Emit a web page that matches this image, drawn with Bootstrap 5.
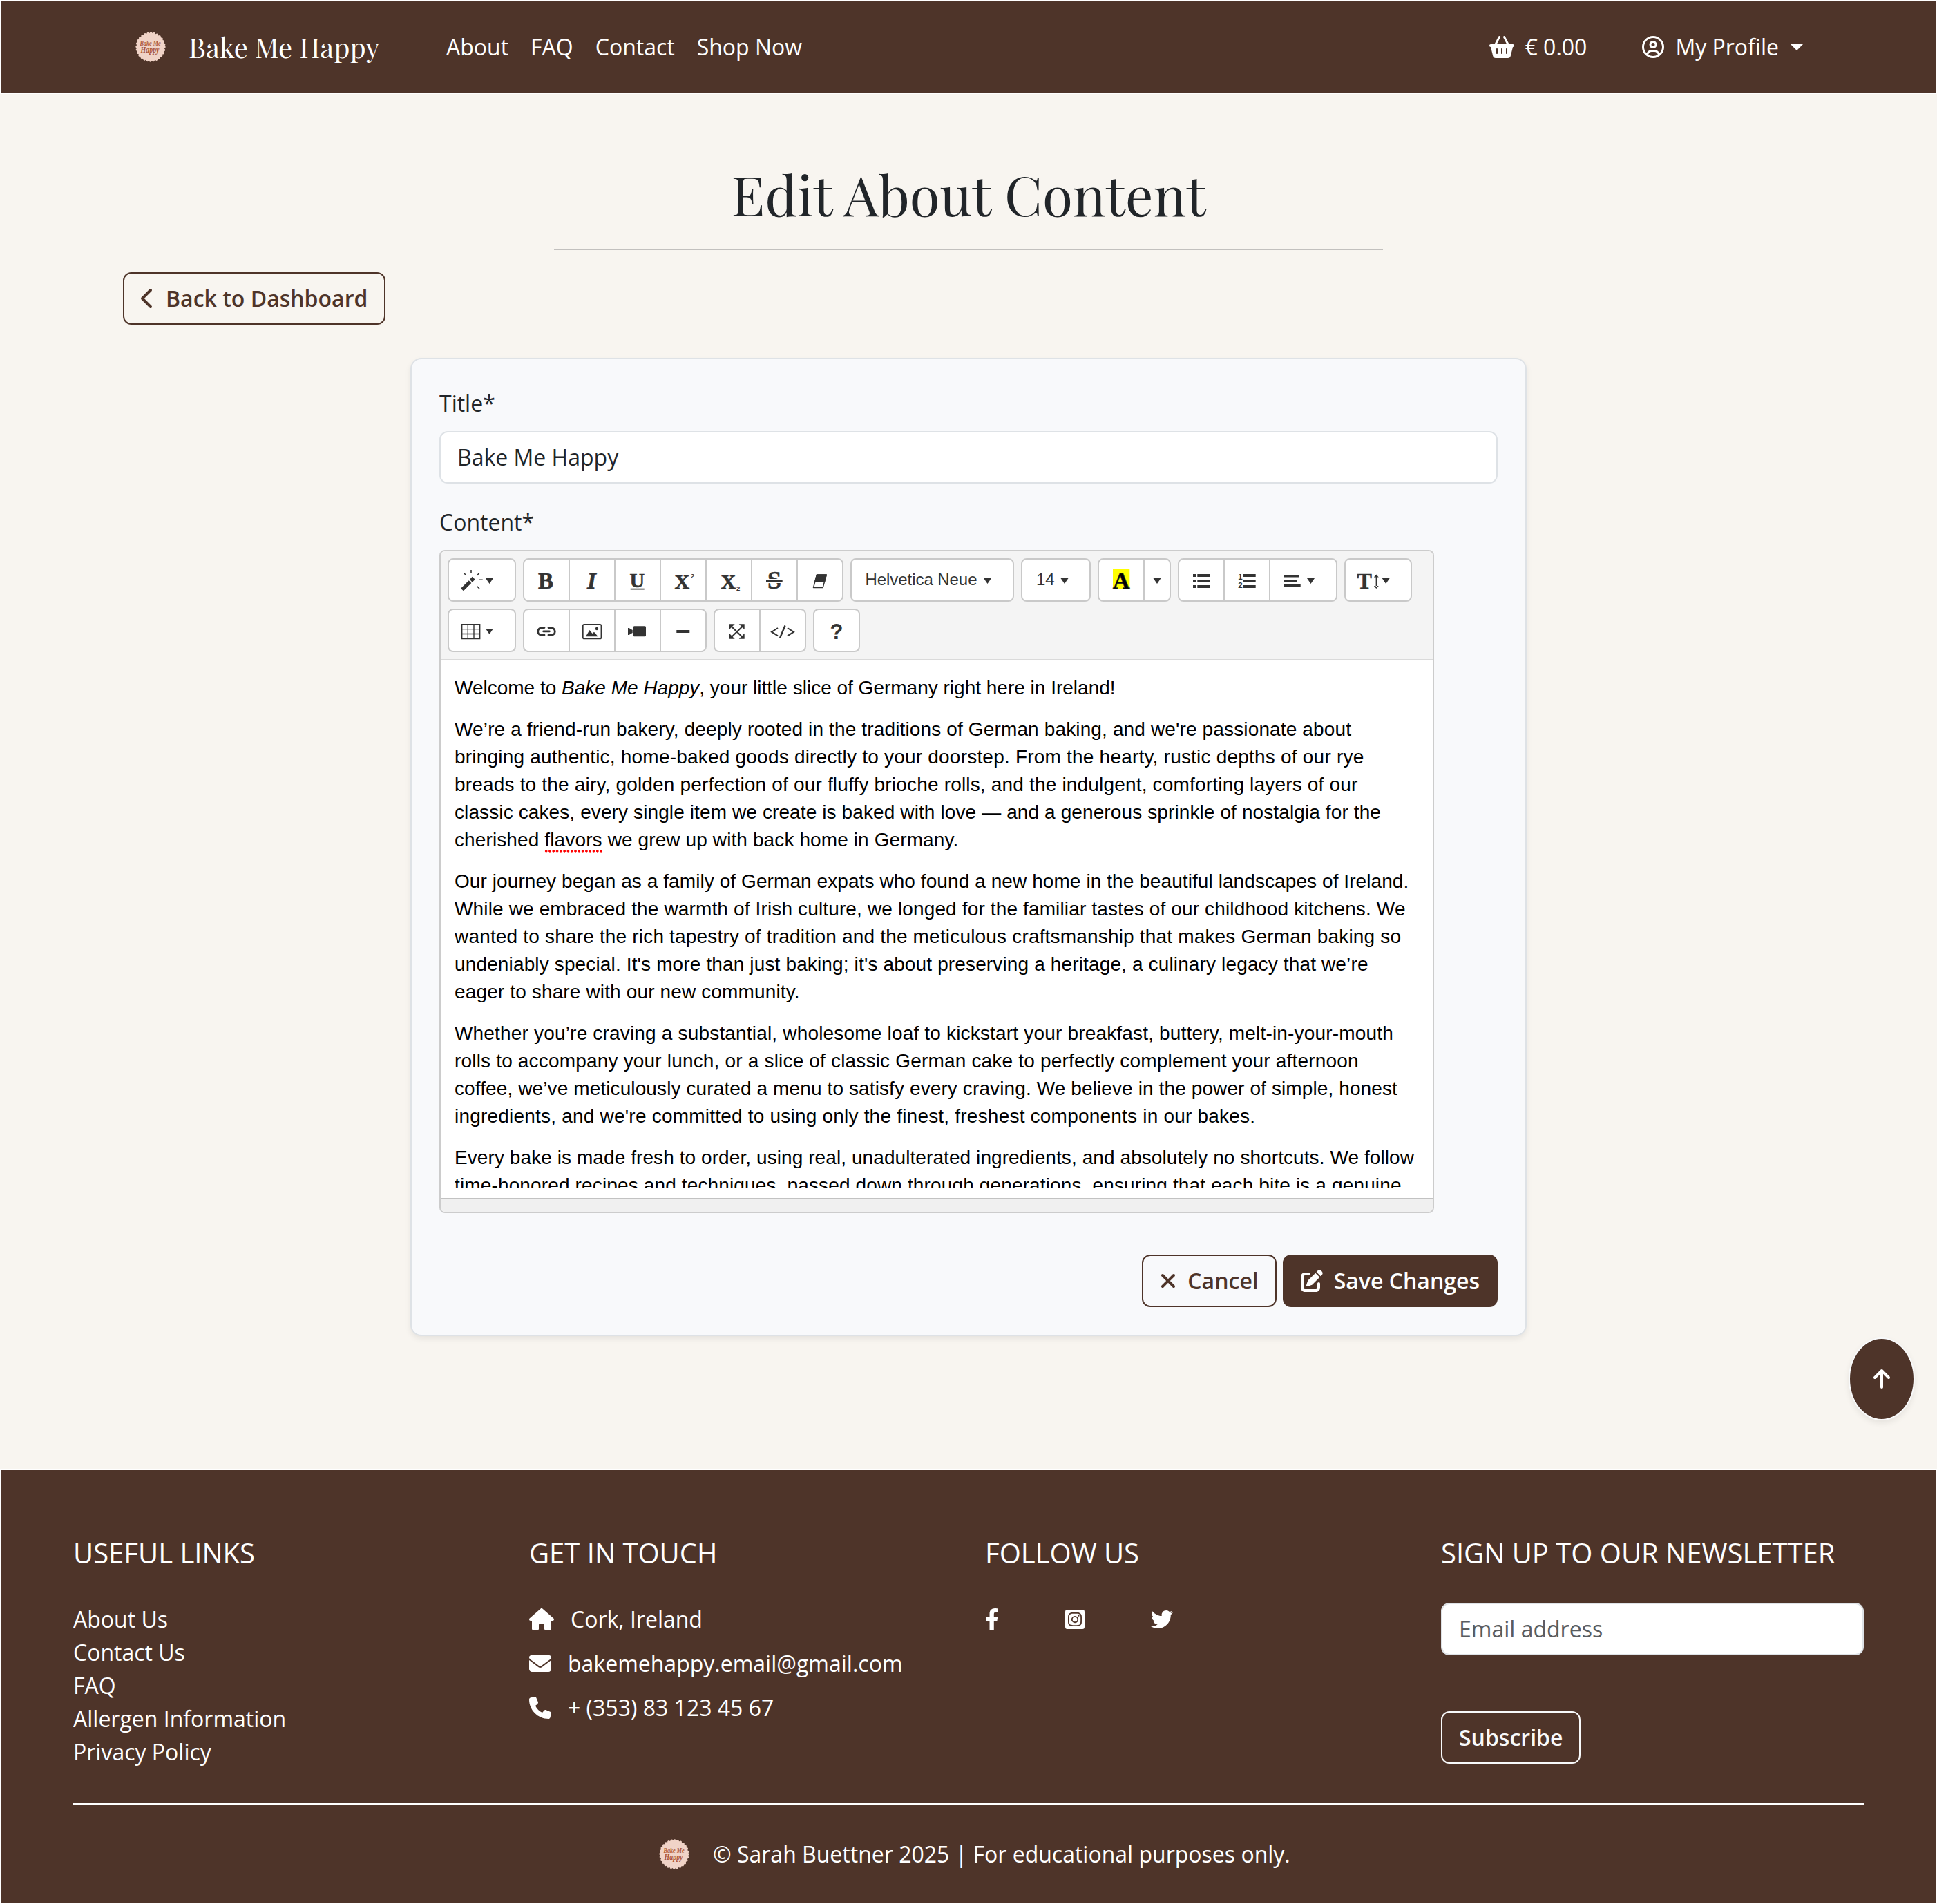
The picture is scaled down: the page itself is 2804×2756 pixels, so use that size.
<!DOCTYPE html>
<html lang="en">
<head>
<meta charset="utf-8">
<meta name="viewport" content="width=device-width, initial-scale=1">
<title>Edit About Content | Bake Me Happy</title>
<link href="https://cdn.jsdelivr.net/npm/bootstrap@5.3.0/dist/css/bootstrap.min.css" rel="stylesheet">
<style>
:root { font-size: 32px; --cocoa: #4e3429; }
body { background: #f8f5f0; font-family: "Open Sans", "Noto Sans", sans-serif; font-size: 32px; line-height: 1.5; --bs-border-width: 2px; overflow-x: hidden; }
svg { display: block; flex: none; }
.fa { height: 32px; fill: currentColor; }
.serif { font-family: "Playfair Display", "Liberation Serif", serif; }
.frame { width: 2640px; margin: 0 auto; }
.cocoa-bar { background: var(--cocoa); border: 2px solid #fff; color: #fff; }
.site-nav { height: 136px; }
.site-nav .frame { padding: 0 112px 0 114px; }
.brand-name { font-size: 40px; line-height: 48px; margin-left: 33px; width: 279px; white-space: nowrap; }
.site-nav .nav-link { color: #fff; padding: 0; margin-right: 32px; }
.nav-links { margin-left: 94px; }
.basket-total { margin-right: 80px; }
.caret-down { border: 9px solid transparent; border-top-color: #fff; border-bottom: 0; margin-left: 17px; }
.page-title { font-size: 80px; line-height: 96px; height: 96px; margin: 96px 0 32px; font-weight: 400; text-align: center; }
.title-rule { width: 1200px; margin: 0 auto 32px; border-top: 2px solid #212529; opacity: .25; }
.btn { --bs-btn-font-size: 32px; --bs-btn-border-width: 2px; --bs-btn-border-radius: 12px; border-width: 2px; border-radius: 12px; font-weight: 600; display: inline-flex; align-items: center; padding: 12px 24px; white-space: nowrap; }
.btn-cocoa { background: var(--cocoa); color: #fff; border-color: var(--cocoa); }
.btn-outline-cocoa { color: var(--cocoa); border-color: var(--cocoa); }
.form-control { border-width: 2px; border-radius: 12px; padding: 11px 24px 13px; height: 76px; font-size: 32px; border-color: #dee2e6; color: #212529; background: #fff; }
.form-control::placeholder { color: #595c5f; opacity: 1; }
.edit-card { width: 1616px; margin: 48px auto 0; padding: 40px; background: #f8f9fb; border: 2px solid #dee2e6; border-radius: 16px; box-shadow: 0 4px 8px rgba(0,0,0,.075); }
.form-label { margin: 0 0 16px; display: block; }
.editor { width: 1440px; border: 2px solid #ccc; border-radius: 8px; overflow: hidden; background: #fff; }
.toolbar { background: #f4f4f4; border-bottom: 2px solid #dadada; padding: 10px; gap: 10px; }
.tool-group { display: flex; height: 63px; }
.tool { border: 2px solid #c9c9c9; background: #fff; padding: 0; width: 68px; height: 63px; margin-left: -2px; color: #333; }
.tool:first-child { margin-left: 0; border-radius: 8px 0 0 8px; }
.tool:last-child { border-radius: 0 8px 8px 0; }
.tool:only-child { border-radius: 8px; }
.tool svg { width: 100%; height: 59px; fill: #333; overflow: visible; }
.tool text { font-family: "Liberation Serif", serif; font-weight: 700; stroke: #333; stroke-width: .6px; }
.tool .sans { font-family: "Liberation Sans", Arial, sans-serif; stroke: none; }
.w-drop, .w-align { width: 99px; }
.w-line { width: 98px; }
.w-font { width: 237px; }
.w-size { width: 101px; }
.w-caret { width: 40px; }
.typing { height: 778px; padding: 20px 20px 14px; }
.typing-view { height: 744px; overflow: hidden; font: 28px/40px "Helvetica Neue", "Liberation Sans", Arial, sans-serif; color: #000; white-space: nowrap; }
.typing-view p { margin: 0 0 20px; }
.typing-view span { letter-spacing: .14px; }
.typing-view .ls-a { letter-spacing: .08px; }
.typing-view .ls-b { letter-spacing: .11px; }
.typing-view .ls-c { letter-spacing: .18px; }
.typing-view .ls-d { letter-spacing: .21px; }
.misspelt { background: radial-gradient(circle, #f00 1.4px, transparent 1.8px) 0 100% / 5.3px 4px repeat-x; padding-bottom: 3px; }
.status-strip { height: 20px; background: #f0f0f0; border-top: 2px solid #c2c2c2; }
.form-actions { margin-top: 60px; gap: 9px; }
.to-top { position: fixed; right: 32px; bottom: 700px; width: 96px; height: 120px; border-radius: 50%; background: var(--cocoa); border: 2px solid #f8f9fa; box-shadow: 0 4px 8px rgba(0,0,0,.075); color: #fff; }
.site-footer { margin-top: 192px; height: 630px; padding-top: 96px; }
.site-footer .foot-col { width: 660px; padding: 0 24px; }
.site-footer h5 { font-size: 40px; line-height: 48px; font-weight: 400; margin: 0 0 48px; white-space: nowrap; }
.site-footer li { height: 48px; }
.foot-cols { height: 386px; }
.foot-contact { height: 48px; margin-bottom: 16px; gap: 24px; }
.foot-social { gap: 96px; }
.foot-rule { height: 2px; background: #fff; margin: 0 24px; }
.btn-subscribe { color: #f8f9fa; border-color: #f8f9fa; margin-top: 81px; }
.copyright { margin: 48px 0 0 872px; }
.copyright span { margin-left: 34px; }
.logo text { fill: #a9563a; font-family: "Liberation Serif", serif; font-style: italic; font-weight: 700; }
</style>
</head>
<body>
<nav class="cocoa-bar site-nav d-flex align-items-center">
  <div class="frame d-flex align-items-center">
    <svg class="logo" width="44" height="44" viewBox="0 0 44 44">
      <circle cx="22" cy="22" r="20.400" fill="#f0d3c7"/>
      <circle cx="22" cy="22" r="20" fill="none" stroke="#f0d3c7" stroke-width="3.400" stroke-linecap="round" stroke-dasharray=".1 4.388"/>
      <text x="6.500" y="20" font-size="10.500" textLength="30" lengthAdjust="spacingAndGlyphs">Bake Me</text>
      <text x="7.500" y="29.500" font-size="11.500" textLength="27" lengthAdjust="spacingAndGlyphs">Happy</text>
    </svg>
    <span class="brand-name serif">Bake Me Happy</span>
    <div class="nav-links d-flex">
      <a class="nav-link" href="#">About</a><a class="nav-link" href="#">FAQ</a><a class="nav-link" href="#">Contact</a><a class="nav-link" href="#">Shop Now</a>
    </div>
    <div class="ms-auto d-flex align-items-center">
      <svg class="fa me-2" width="36" viewBox="0 0 576 512"><path d="M253.3 35.1c6.1-11.8 1.5-26.3-10.2-32.4s-26.3-1.5-32.4 10.2L117.6 192H32c-17.7 0-32 14.3-32 32s14.3 32 32 32L83.9 463.5C91 492 116.6 512 146 512H430c29.4 0 55-20 62.1-48.5L544 256c17.7 0 32-14.3 32-32s-14.3-32-32-32H458.4L365.3 12.9C359.2 1.2 344.7-3.4 332.9 2.7s-16.3 20.6-10.2 32.4L404.3 192H171.7L253.3 35.1zM192 304v96c0 8.800-7.200 16-16 16s-16-7.200-16-16V304c0-8.800 7.200-16 16-16s16 7.200 16 16zm96-16c8.800 0 16 7.200 16 16v96c0 8.800-7.200 16-16 16s-16-7.200-16-16V304c0-8.800 7.200-16 16-16zm128 16v96c0 8.800-7.200 16-16 16s-16-7.200-16-16V304c0-8.800 7.200-16 16-16s16 7.200 16 16z"/></svg>
      <span class="basket-total">€ 0.00</span>
      <svg class="fa me-2" width="32" viewBox="0 0 512 512"><path d="M406.5 399.6C387.4 352.9 341.5 320 288 320H224c-53.500 0-99.400 32.900-118.500 79.600C69.900 362.200 48 311.700 48 256C48 141.100 141.100 48 256 48s208 93.100 208 208c0 55.700-21.900 106.200-57.500 143.600zm-40.100 32.700C334.400 452.400 296.600 464 256 464s-78.400-11.600-110.500-31.700c7.300-36.700 39.700-64.300 78.500-64.300h64c38.800 0 71.200 27.600 78.500 64.300zM256 512A256 256 0 1 0 256 0a256 256 0 1 0 0 512zm0-272a40 40 0 1 1 0-80 40 40 0 1 1 0 80zm-88-40a88 88 0 1 0 176 0 88 88 0 1 0 -176 0z"/></svg>
      <span>My Profile</span><span class="caret-down"></span>
    </div>
  </div>
</nav>

<main>
  <h1 class="page-title serif">Edit About Content</h1>
  <div class="title-rule"></div>
  <div class="frame d-flex ps-5">
    <a class="btn btn-outline-cocoa" href="#"><svg class="fa me-2" width="20" viewBox="0 0 320 512"><path d="M9.400 233.400c-12.500 12.500-12.500 32.800 0 45.300l192 192c12.500 12.500 32.800 12.500 45.300 0s12.500-32.800 0-45.300L77.300 256 246.600 86.600c12.500-12.500 12.500-32.800 0-45.300s-32.800-12.500-45.300 0l-192 192z"/></svg>Back to Dashboard</a>
  </div>
  <form class="edit-card" onsubmit="return false">
    <label class="form-label" for="t">Title*</label>
    <input class="form-control" id="t" value="Bake Me Happy">
    <label class="form-label mt-3">Content*</label>
    <div class="editor">
      <div class="toolbar d-flex flex-wrap">
        <div class="tool-group"><button class="tool w-drop"><svg viewBox="0 0 95 59"><path d="M17 41.700L28.700 30.300 32.300 34 21 45.300zM33.700 24.700L37.700 28.700 33.700 32.700 30 28.700zM53 27h11l-5.500 8z"/><path stroke="#333" stroke-width="1.600" d="M32 15v5M21.300 19.300l3.400 3.400M40.700 22.700l3.300-3.400M43.300 29.300h5.400M40.700 38.700l3.300 3.300"/></svg></button></div>
        <div class="tool-group">
          <button class="tool"><svg viewBox="0 0 64 59"><text x="20" y="42" font-size="33">B</text></svg></button>
          <button class="tool"><svg viewBox="0 0 64 59"><text x="25" y="42" font-size="33" font-style="italic">I</text></svg></button>
          <button class="tool"><svg viewBox="0 0 64 59"><text x="20.500" y="40" font-size="30">U</text><path d="M21.700 41.800h20v1.700h-20z"/></svg></button>
          <button class="tool"><svg viewBox="0 0 64 59"><text x="19.500" y="41.700" font-size="30">X</text><text class="sans" x="43" y="26.500" font-size="9.500">2</text></svg></button>
          <button class="tool"><svg viewBox="0 0 64 59"><text x="20.500" y="41.700" font-size="30">X</text><text class="sans" x="43" y="45" font-size="9.500">2</text></svg></button>
          <button class="tool"><svg viewBox="0 0 64 59"><text x="22" y="42.400" font-size="36">S</text><path fill="#fff" d="M20 28h24v6H20z"/><path d="M20 29.300h23.700v3.300H20z"/></svg></button>
          <button class="tool"><svg viewBox="0 0 64 59"><path fill="none" stroke="#333" stroke-width="1.500" stroke-linejoin="round" d="M27.500 22h13.700l-5 18.500H22.500z"/><path stroke="#333" stroke-width="1.500" stroke-linejoin="round" d="M27.500 22h13.700l-2.800 10.300H24.700z"/></svg></button>
        </div>
        <div class="tool-group"><button class="tool w-font"><svg viewBox="0 0 233 59"><text class="sans" x="19.500" y="37" font-size="24" style="font-weight:400" textLength="162">Helvetica Neue</text><path d="M191 27h11l-5.500 8z"/></svg></button></div>
        <div class="tool-group"><button class="tool w-size"><svg viewBox="0 0 97 59"><text class="sans" x="20" y="37" font-size="24" style="font-weight:400">14</text><path d="M55.500 27h11l-5.500 8z"/></svg></button></div>
        <div class="tool-group">
          <button class="tool"><svg viewBox="0 0 64 59"><path fill="#ff0" d="M20 14h24.300v28.700H20z"/><text x="19.700" y="42.300" font-size="34.500" fill="#000">A</text></svg></button>
          <button class="tool w-caret"><svg viewBox="0 0 36 59"><path d="M12.500 27h11l-5.500 8z"/></svg></button>
        </div>
        <div class="tool-group">
          <button class="tool"><svg viewBox="0 0 64 59"><path d="M20 21h4v4h-4zM20 29h4v4h-4zM20 37h4v4h-4zM26.300 21h18v4h-18zM26.300 29h18v4h-18zM26.300 37h18v4h-18z"/></svg></button>
          <button class="tool"><svg viewBox="0 0 64 59"><text class="sans" x="19.300" y="29" font-size="11.500">1</text><text class="sans" x="19.300" y="41" font-size="11.500">2</text><path d="M27 21h17.700v4H27zM27 29h17.700v4H27zM27 37h17.700v4H27z"/></svg></button>
          <button class="tool w-align"><svg viewBox="0 0 95 59"><path d="M20 22h22v3.600H20zM20 29h18.300v3.800H20zM20 36h23.700v3.800H20zM53 27h11l-5.500 8z"/></svg></button>
        </div>
        <div class="tool-group"><button class="tool w-line"><svg viewBox="0 0 94 59"><text x="16.500" y="42" font-size="32">T</text><path d="M44.300 21.500l3.500 4h-7zM44.300 42l3.500-4h-7zM43.600 24h1.500v16h-1.500zM52.700 27h11l-5.500 8z"/></svg></button></div>
        <div class="tool-group"><button class="tool w-drop"><svg viewBox="0 0 95 59"><path fill="none" stroke="#333" stroke-width="1.400" d="M18.700 20.700h26v20.800h-26zM27.300 20.700v20.800M36 20.700v20.800M18.700 27.600h26M18.700 34.500h26"/><path d="M53 27h11l-5.500 8z"/></svg></button></div>
        <div class="tool-group">
          <button class="tool"><svg viewBox="0 0 64 59"><path fill="none" stroke="#333" stroke-width="2.800" stroke-linecap="round" d="M29 25.600h-4a5.300 5.300 0 0 0 0 10.600h4M35 25.600h4a5.300 5.300 0 0 1 0 10.600h-4M27.700 30.900h8.600"/></svg></button>
          <button class="tool"><svg viewBox="0 0 64 59"><rect x="18.800" y="20.800" width="26.600" height="20.600" rx="2" fill="none" stroke="#333" stroke-width="1.700"/><path d="M23 38.300l5.500-9.300 4 5 2.500-2.200 5.700 6.500z"/><circle cx="39" cy="27" r="2.200"/></svg></button>
          <button class="tool"><svg viewBox="0 0 64 59"><rect x="25.700" y="23.300" width="18.300" height="15" rx="1.500"/><path d="M18 26h1.500l5.200 3v4l-5.200 3H18z"/></svg></button>
          <button class="tool"><svg viewBox="0 0 64 59"><path d="M22.300 29h19v4h-19z"/></svg></button>
        </div>
        <div class="tool-group">
          <button class="tool"><svg viewBox="0 0 64 59"><path stroke="#333" stroke-width="2" d="M23 23l17.500 17M40.500 23L23 40"/><path d="M20.700 20.300h8l-8 8zM42.700 20.300v8l-8-8zM20.700 41.700v-8l8 8zM42.700 41.700h-8l8-8z"/></svg></button>
          <button class="tool"><svg viewBox="0 0 64 59"><path fill="none" stroke="#333" stroke-width="2" d="M25 26l-9 5.700 9 5.700M39 26l9 5.700-9 5.700"/><path fill="none" stroke="#333" stroke-width="2.400" d="M35.500 22.500l-7.500 18"/></svg></button>
        </div>
        <div class="tool-group"><button class="tool"><svg viewBox="0 0 64 59"><text class="sans" x="22.500" y="42.200" font-size="31">?</text></svg></button></div>
      </div>
      <div class="typing"><div class="typing-view">
        <p>Welcome to <em>Bake Me Happy</em>, your little slice of Germany right here in Ireland!</p>
        <p><span>We’re a friend-run bakery, deeply rooted in the traditions of German baking, and we're passionate about</span><br><span class="ls-d">bringing authentic, home-baked goods directly to your doorstep. From the hearty, rustic depths of our rye</span><br><span class="ls-c">breads to the airy, golden perfection of our fluffy brioche rolls, and the indulgent, comforting layers of our</span><br><span class="ls-b">classic cakes, every single item we create is baked with love — and a generous sprinkle of nostalgia for the</span><br><span class="ls-b">cherished <span class="misspelt">flavors</span> we grew up with back home in Germany.</span></p>
        <p><span class="ls-a">Our journey began as a family of German expats who found a new home in the beautiful landscapes of Ireland.</span><br><span>While we embraced the warmth of Irish culture, we longed for the familiar tastes of our childhood kitchens. We</span><br><span class="ls-c">wanted to share the rich tapestry of tradition and the meticulous craftsmanship that makes German baking so</span><br><span>undeniably special. It's more than just baking; it's about preserving a heritage, a culinary legacy that we’re</span><br><span>eager to share with our new community.</span></p>
        <p><span class="ls-c">Whether you’re craving a substantial, wholesome loaf to kickstart your breakfast, buttery, melt-in-your-mouth</span><br><span class="ls-c">rolls to accompany your lunch, or a slice of classic German cake to perfectly complement your afternoon</span><br><span class="ls-b">coffee, we’ve meticulously curated a menu to satisfy every craving. We believe in the power of simple, honest</span><br><span class="ls-d">ingredients, and we're committed to using only the finest, freshest components in our bakes.</span></p>
        <p><span class="ls-a">Every bake is made fresh to order, using real, unadulterated ingredients, and absolutely no shortcuts. We follow</span><br><span>time-honored recipes and techniques, passed down through generations, ensuring that each bite is a genuine</span></p>
      </div></div>
      <div class="status-strip"></div>
    </div>
    <div class="d-flex justify-content-end form-actions">
      <button class="btn btn-outline-cocoa"><svg class="fa me-2" width="24" viewBox="0 0 384 512"><path d="M342.600 150.600c12.500-12.500 12.500-32.800 0-45.300s-32.800-12.500-45.300 0L192 210.700 86.600 105.400c-12.500-12.500-32.800-12.500-45.300 0s-12.500 32.800 0 45.300L146.700 256 41.400 361.400c-12.500 12.500-12.500 32.800 0 45.300s32.800 12.500 45.300 0L192 301.300 297.400 406.600c12.500 12.500 32.800 12.500 45.300 0s12.500-32.800 0-45.300L237.300 256 342.600 150.600z"/></svg>Cancel</button>
      <button class="btn btn-cocoa"><svg class="fa me-2" width="32" viewBox="0 0 512 512"><path d="M471.600 21.700c-21.900-21.900-57.300-21.900-79.200 0L362.300 51.700l97.900 97.900 30.100-30.100c21.900-21.900 21.900-57.300 0-79.200L471.600 21.700zm-299.200 220c-6.100 6.100-10.800 13.600-13.500 21.900l-29.600 88.800c-2.900 8.600-.6 18.100 5.800 24.600s15.900 8.700 24.600 5.800l88.800-29.600c8.200-2.700 15.700-7.400 21.900-13.500L437.700 172.300 339.700 74.300 172.400 241.700zM96 64C43 64 0 107 0 160V416c0 53 43 96 96 96H352c53 0 96-43 96-96V320c0-17.700-14.300-32-32-32s-32 14.300-32 32v96c0 17.700-14.300 32-32 32H96c-17.700 0-32-14.300-32-32V160c0-17.700 14.300-32 32-32h96c17.700 0 32-14.300 32-32s-14.300-32-32-32H96z"/></svg>Save Changes</button>
    </div>
  </form>
</main>

<a class="to-top d-flex align-items-center justify-content-center" href="#" aria-label="Back to top"><svg class="fa" width="24" viewBox="0 0 384 512"><path d="M214.600 41.400c-12.500-12.500-32.800-12.500-45.300 0l-160 160c-12.500 12.500-12.500 32.800 0 45.300s32.800 12.500 45.300 0L160 141.200V448c0 17.700 14.300 32 32 32s32-14.300 32-32V141.200L329.400 246.600c12.500 12.500 32.800 12.500 45.300 0s12.500-32.800 0-45.300l-160-160z"/></svg></a>

<footer class="cocoa-bar site-footer">
  <div class="frame">
    <div class="foot-cols d-flex">
      <div class="foot-col"><h5>USEFUL LINKS</h5>
        <ul class="list-unstyled mb-0"><li>About Us</li><li>Contact Us</li><li>FAQ</li><li>Allergen Information</li><li>Privacy Policy</li></ul></div>
      <div class="foot-col"><h5>GET IN TOUCH</h5>
        <div class="foot-contact d-flex align-items-center"><svg class="fa" width="36" viewBox="0 0 576 512"><path d="M575.800 255.500c0 18-15 32.100-32 32.100h-32l.7 160.200c0 2.700-.2 5.400-.5 8.100V472c0 22.100-17.900 40-40 40H456c-1.100 0-2.200 0-3.300-.1c-1.400 .1-2.800 .1-4.200 .1H416 392c-22.100 0-40-17.900-40-40V448 384c0-17.700-14.300-32-32-32H256c-17.700 0-32 14.300-32 32v64 24c0 22.100-17.900 40-40 40H160 128.100c-1.500 0-3-.1-4.500-.2c-1.200 .1-2.400 .2-3.600 .2H104c-22.100 0-40-17.900-40-40V360c0-.9 0-1.900 .1-2.800V287.600H32c-18 0-32-14-32-32.100c0-9 3-17 10-24L266.400 8c7-7 15-8 22-8s15 2 21 7L564.800 231.500c8 7 12 15 11 24z"/></svg>Cork, Ireland</div>
        <div class="foot-contact d-flex align-items-center"><svg class="fa" width="32" viewBox="0 0 512 512"><path d="M48 64C21.500 64 0 85.500 0 112c0 15.100 7.100 29.300 19.200 38.400L236.800 313.600c11.400 8.500 27 8.500 38.400 0L492.800 150.400c12.100-9.100 19.200-23.300 19.200-38.400c0-26.500-21.500-48-48-48H48zM0 176V384c0 35.300 28.700 64 64 64H448c35.300 0 64-28.700 64-64V176L294.400 339.200c-22.800 17.100-54 17.100-76.800 0L0 176z"/></svg>bakemehappy.email@gmail.com</div>
        <div class="foot-contact d-flex align-items-center"><svg class="fa" width="32" viewBox="0 0 512 512"><path d="M164.900 24.600c-7.700-18.600-28-28.500-47.400-23.200l-88 24C12.100 30.200 0 46 0 64C0 311.400 200.600 512 448 512c18 0 33.800-12.100 38.600-29.500l24-88c5.300-19.400-4.600-39.700-23.200-47.400l-96-40c-16.300-6.800-35.200-2.100-46.300 11.600L304.700 368C234.300 334.700 177.300 277.700 144 207.300L193.300 167c13.700-11.200 18.400-30 11.600-46.300l-40-96z"/></svg>+ (353) 83 123 45 67</div></div>
      <div class="foot-col"><h5>FOLLOW US</h5>
        <div class="foot-contact foot-social d-flex align-items-center">
          <svg class="fa" width="20" viewBox="0 0 320 512"><path d="M279.140 288l14.220-92.660h-88.910v-60.130c0-25.350 12.420-50.060 52.240-50.060h40.420V6.260S260.430 0 225.360 0c-73.220 0-121.080 44.380-121.080 124.720v70.620H22.890V288h81.390v224h100.170V288z"/></svg>
          <svg class="fa" width="28" viewBox="0 0 448 512"><path d="M224,202.660A53.340,53.340,0,1,0,277.360,256,53.380,53.380,0,0,0,224,202.660Zm124.710-41a54,54,0,0,0-30.410-30.410c-21-8.290-71-6.430-94.300-6.430s-73.250-1.930-94.310,6.430a54,54,0,0,0-30.410,30.410c-8.280,21-6.430,71.050-6.430,94.330S91,329.260,99.320,350.330a54,54,0,0,0,30.410,30.410c21,8.290,71,6.430,94.310,6.430s73.240,1.930,94.300-6.430a54,54,0,0,0,30.410-30.410c8.350-21,6.430-71.050,6.430-94.330S357.100,182.740,348.750,161.670ZM224,338a82,82,0,1,1,82-82A81.900,81.900,0,0,1,224,338Zm85.380-148.300a19.140,19.140,0,1,1,19.130-19.140A19.100,19.100,0,0,1,309.420,189.740ZM400,32H48A48,48,0,0,0,0,80V432a48,48,0,0,0,48,48H400a48,48,0,0,0,48-48V80A48,48,0,0,0,400,32ZM382.880,322c-1.290,25.630-7.140,48.340-25.850,67s-41.400,24.630-67,25.850c-26.410,1.490-105.590,1.490-132,0-25.630-1.290-48.260-7.150-67-25.850s-24.630-41.420-25.850-67c-1.490-26.420-1.490-105.610,0-132,1.290-25.630,7.070-48.340,25.850-67s41.470-24.560,67-25.780c26.410-1.490,105.590-1.490,132,0,25.630,1.290,48.330,7.150,67,25.850s24.630,41.420,25.850,67.050C384.370,216.440,384.370,295.560,382.880,322Z"/></svg>
          <svg class="fa" width="32" viewBox="0 0 512 512"><path d="M459.370 151.716c.325 4.548.325 9.097.325 13.645 0 138.720-105.583 298.558-298.558 298.558-59.452 0-114.680-17.219-161.137-47.106 8.447.974 16.568 1.299 25.340 1.299 49.055 0 94.213-16.568 130.274-44.832-46.132-.975-84.792-31.188-98.112-72.772 6.498.974 12.995 1.624 19.818 1.624 9.421 0 18.843-1.300 27.614-3.573-48.081-9.747-84.143-51.980-84.143-102.985v-1.299c13.969 7.797 30.214 12.670 47.431 13.319-28.264-18.843-46.781-51.005-46.781-87.391 0-19.492 5.197-37.360 14.294-52.954 51.655 63.675 129.300 105.258 216.365 109.807-1.624-7.797-2.599-15.918-2.599-24.040 0-57.828 46.782-104.934 104.934-104.934 30.213 0 57.502 12.670 76.670 33.137 23.715-4.548 46.456-13.320 66.599-25.340-7.798 24.366-24.366 44.833-46.132 57.827 21.117-2.273 41.584-8.122 60.426-16.243-14.292 20.791-32.161 39.308-52.628 54.253z"/></svg>
        </div></div>
      <div class="foot-col"><h5>SIGN UP TO OUR NEWSLETTER</h5>
        <input class="form-control" placeholder="Email address"><button class="btn btn-subscribe">Subscribe</button></div>
    </div>
    <div class="foot-rule"></div>
    <div class="copyright d-flex align-items-center">
      <svg class="logo" width="44" height="44" viewBox="0 0 44 44">
        <circle cx="22" cy="22" r="20.400" fill="#f0d3c7"/>
        <circle cx="22" cy="22" r="20" fill="none" stroke="#f0d3c7" stroke-width="3.400" stroke-linecap="round" stroke-dasharray=".1 4.388"/>
        <text x="6.500" y="20" font-size="10.500" textLength="30" lengthAdjust="spacingAndGlyphs">Bake Me</text>
        <text x="7.500" y="29.500" font-size="11.500" textLength="27" lengthAdjust="spacingAndGlyphs">Happy</text>
      </svg>
      <span>© Sarah Buettner 2025 | For educational purposes only.</span>
    </div>
  </div>
</footer>
<script src="https://cdn.jsdelivr.net/npm/bootstrap@5.3.0/dist/js/bootstrap.bundle.min.js"></script>
</body>
</html>
